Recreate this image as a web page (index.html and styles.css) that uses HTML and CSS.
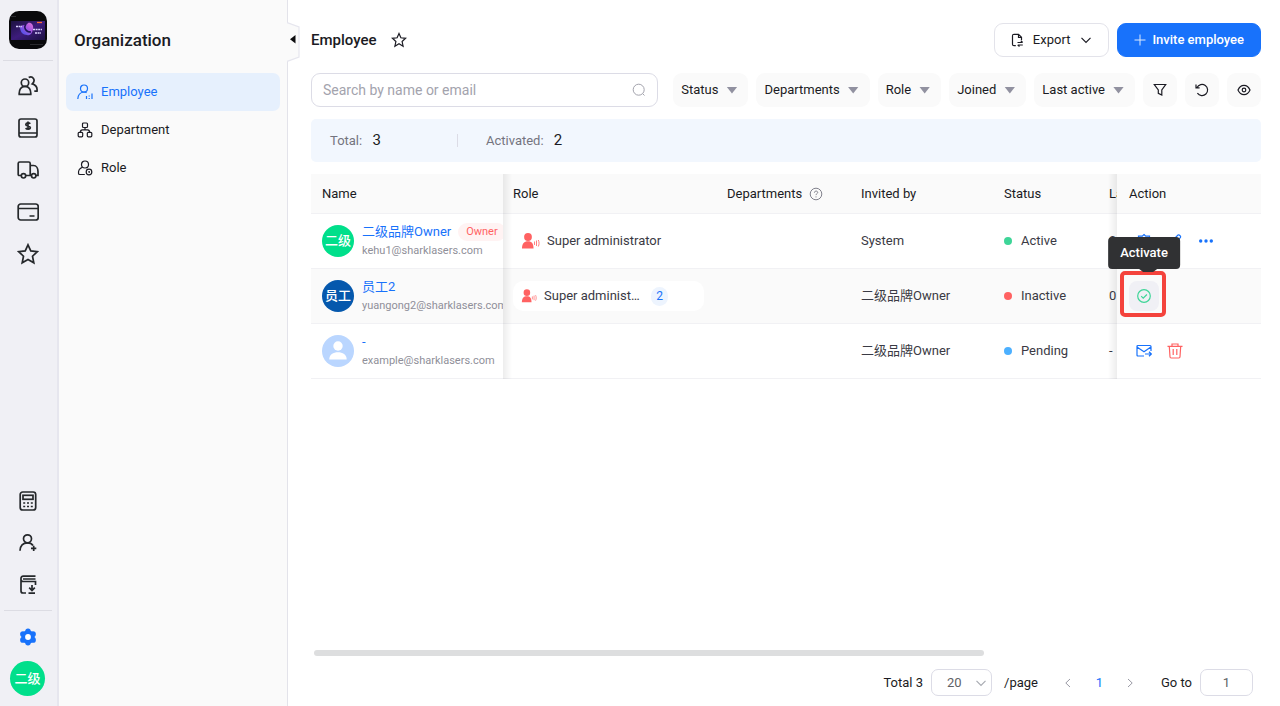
FILE: index.html
```html
<!DOCTYPE html>
<html lang="en">
<head>
<meta charset="utf-8">
<title>Employee - Organization</title>
<link rel="stylesheet" href="styles.css">
</head>
<body>
<nav class="rail" aria-label="Main">
  <a class="brand" href="#" aria-label="Home">
    <svg width="40" height="40" viewBox="0 0 40 40">
      <defs>
        <linearGradient id="screen" x1="0" y1="0" x2="1" y2="1"><stop offset="0" stop-color="#1c1240"/><stop offset=".5" stop-color="#3d1c7c"/><stop offset="1" stop-color="#1a1040"/></linearGradient>
        <linearGradient id="swirl" x1="0" y1="1" x2="1" y2="0"><stop offset="0" stop-color="#3450e8"/><stop offset=".6" stop-color="#a855e0"/><stop offset="1" stop-color="#e078d8"/></linearGradient>
      </defs>
      <rect x="1" y="1" width="38" height="38" rx="10" fill="#09090b"/>
      <rect x="3" y="11" width="34" height="19" fill="url(#screen)"/>
      <path d="M12 17c3-3 6-1 8-4 3-1 6 2 5 6-1 5-3 7-6 6-4 0-7-3-7-8z" fill="url(#swirl)"/>
      <path d="M18 14c-3 4 0 8 5 8" stroke="#20155a" stroke-width="1.500" fill="none"/>
      <path d="M8 16.500h6M25 19.500h9M27 23h6" stroke="#dcd4ff" stroke-width="1.300" stroke-dasharray="2 .6"/>
      <path d="M29 12.500h5" stroke="#ff6b35" stroke-width="1.300"/>
      <path d="M3 6.500h5M22 34.500h13" stroke="#39393d" stroke-width=".7"/>
    </svg>
  </a>
  <hr class="rail-line">
  <div class="rail-group">
    <a class="rail-item" href="#" aria-label="Customers"><svg width="22" height="22" viewBox="0 0 22 22"><circle cx="8" cy="7.700" r="3.700"/><path d="M2.200 19.300c-.3-5 2-7.900 5.800-7.900s6.100 2.900 5.800 7.900zM11.700 2.600c3.800-2.200 7.600 2.600 3.600 6.300 3.300 1 5.200 3.800 4.700 7.200h-2.700"/></svg></a>
    <a class="rail-item" href="#" aria-label="Finance"><svg width="22" height="22" viewBox="0 0 22 22"><rect x="2" y="2" width="18" height="18" rx="2"/><path d="M2 16h18M13.300 6.800c-1-1.200-4.300-1.300-4.500.7-.1 2 4.500 1 4.500 3.100 0 2-3.600 1.800-4.700.5M11 4.500v8.500"/></svg></a>
    <a class="rail-item" href="#" aria-label="Shipping"><svg width="22" height="22" viewBox="0 0 22 22"><path d="M4 16.500H2.200a1 1 0 0 1-1-1v-11c0-1 .5-1.500 1.500-1.500h9c1 0 1.500.5 1.500 1.500v12H9M13 6.500h3.500c3 0 4.500 3 4.500 6v4h-2.200M13 16.500h1"/><circle cx="6.500" cy="16.800" r="2.200"/><circle cx="16.700" cy="16.800" r="2.200"/></svg></a>
    <a class="rail-item" href="#" aria-label="Cards"><svg width="22" height="22" viewBox="0 0 22 22"><rect x="1.200" y="3" width="20" height="16" rx="2.500"/><path d="M1.200 7.500h20M12.500 15h5"/></svg></a>
    <a class="rail-item" href="#" aria-label="Favorites"><svg width="22" height="22" viewBox="0 0 22 22"><path d="M11 1.800l2.800 6.100 6.500.8-4.800 4.500 1.300 6.600-5.800-3.300-5.800 3.300 1.300-6.600L1.700 8.700l6.500-.8z"/></svg></a>
  </div>
  <div class="rail-group rail-bottom">
    <a class="rail-item" href="#" aria-label="Calculator"><svg width="22" height="22" viewBox="0 0 22 22"><rect x="3.200" y="2" width="15.500" height="18" rx="2.500"/><rect x="6" y="5.300" width="10" height="4"/><path d="M6.200 13h2M10 13h2M13.800 13h2M6.200 16.500h2M10 16.500h2M13.800 16.500h2"/></svg></a>
    <a class="rail-item" href="#" aria-label="Add user"><svg width="22" height="22" viewBox="0 0 22 22"><circle cx="10.500" cy="6.800" r="4"/><path d="M3 18.700c.3-5 3.200-7.800 7.500-7.800 2.600 0 4.400.9 5.500 2.600M16.700 13.800v5.200M14 16.400h5.300"/></svg></a>
    <a class="rail-item" href="#" aria-label="Downloads"><svg width="22" height="22" viewBox="0 0 22 22"><path d="M18.500 2.200H6.500C4.500 2.200 4 3 4 4.200V17c0 1.300.7 2 2 2h3M4 5.500c0 1.200.8 2 2 2h12.500V11M6 5h12.500M15 11v5.200M12.200 13.700l2.800 2.800 2.800-2.800M11.500 19.200h6.500"/></svg></a>
  </div>
  <hr class="rail-line rail-line-short">
  <a class="rail-item rail-settings" href="#" aria-label="Settings"><svg width="20" height="20" viewBox="0 0 20 20"><g fill="#1872fb"><circle cx="10" cy="10" r="6.700"/><circle cx="10" cy="4.300" r="2.700"/><circle cx="10" cy="15.700" r="2.700"/><circle cx="5" cy="7.100" r="2.900"/><circle cx="15" cy="7.100" r="2.900"/><circle cx="5" cy="12.900" r="2.900"/><circle cx="15" cy="12.900" r="2.900"/></g><circle cx="10" cy="10" r="2.900" fill="#fff"/></svg></a>
  <button class="avatar avatar-me" type="button">二级</button>
</nav>

<aside class="side">
  <h2 class="side-title">Organization</h2>
  <ul class="menu">
    <li><a class="menu-item menu-active" href="#"><svg width="16" height="16" viewBox="0 0 16 16"><circle cx="7" cy="4.500" r="3.500"/><path d="M.8 15c.2-4 2.400-6.700 6.200-7 1 0 1.900.2 2.600.7M9.500 15v-3M12.200 15v-1M15 15V9.500M12.200 12.500v-1"/></svg>Employee</a></li>
    <li><a class="menu-item" href="#"><svg width="16" height="16" viewBox="0 0 16 16"><rect x="5.500" y="1" width="5" height="4.500" rx="1"/><rect x="1.200" y="10.300" width="4.500" height="4.500" rx="1"/><rect x="10.300" y="10.300" width="4.500" height="4.500" rx="1"/><path d="M8 5.500v2.300M3.400 10.300c0-1.800.6-2.500 2-2.500h5.200c1.400 0 2 .7 2 2.500"/></svg>Department</a></li>
    <li><a class="menu-item" href="#"><svg width="16" height="16" viewBox="0 0 16 16"><circle cx="8" cy="4.500" r="3.500"/><path d="M5.500 7.300C2.500 8.500 1.300 11 1.500 13.200c0 .9.500 1.300 1.300 1.300h5"/><circle cx="12" cy="12" r="2.800"/><path d="M10.500 8l-1-.7M12 11v1.200h1"/></svg>Role</a></li>
  </ul>
  <button class="fold" type="button" aria-label="Collapse menu">
    <svg width="13" height="40" viewBox="0 0 13 40"><path d="M0 .5l12 4.500v30L0 39.500z" fill="#fafafa"/><path d="M0 .5l12 4.500v30L0 39.500" stroke="#e6e6ee"/><path d="M8.500 13v8.500L3 17.200z" fill="#0c0c0e"/></svg>
  </button>
</aside>

<main class="main">
  <header class="head">
    <h1 class="title">Employee</h1>
    <button class="star" type="button" aria-label="Favorite"><svg width="16" height="16" viewBox="0 0 16 16"><path d="M8 1.500l1.900 4.300 4.700.5-3.500 3.200 1 4.700L8 11.800l-4.100 2.400 1-4.700L1.400 6.300l4.700-.5z"/></svg></button>
    <div class="head-actions">
      <button class="btn" type="button"><svg width="14" height="14" viewBox="0 0 14 14"><path d="M4.800 12.700H3c-1 0-1.500-.5-1.500-1.500V2.800c0-1 .5-1.500 1.500-1.500h4.500L10.500 4.300V7M7.500 1.500v3h3M6.500 9.500h5M9.800 7.800l1.900 1.700M11.800 12h-5M8.500 13.500L6.700 12"/></svg>Export<svg class="chev" width="12" height="12" viewBox="0 0 12 12"><path d="M1.500 3.800L6 8.300l4.500-4.500"/></svg></button>
      <button class="btn btn-primary" type="button"><svg class="plus" width="12" height="12" viewBox="0 0 12 12"><path d="M6 .5v11M.5 6h11"/></svg>Invite employee</button>
    </div>
  </header>

  <div class="filters">
    <label class="search"><input type="text" placeholder="Search by name or email" aria-label="Search by name or email"><svg width="14" height="14" viewBox="0 0 14 14"><circle cx="6.700" cy="6.700" r="5.500"/><path d="M10.800 10.800l1.700 1.700"/></svg></label>
    <div class="filter-set">
      <button class="filter" type="button">Status<span class="caret"></span></button>
      <button class="filter" type="button">Departments<span class="caret"></span></button>
      <button class="filter" type="button">Role<span class="caret"></span></button>
      <button class="filter" type="button">Joined<span class="caret"></span></button>
      <button class="filter" type="button">Last active<span class="caret"></span></button>
      <button class="filter filter-icon" type="button" aria-label="Filter"><svg width="14" height="14" viewBox="0 0 14 14"><path d="M1.300 1.500h11.400L8.800 7v5L5.300 10.300V7z"/></svg></button>
      <button class="filter filter-icon" type="button" aria-label="Reset"><svg width="14" height="14" viewBox="0 0 14 14"><path d="M2 4.500a5.600 5.600 0 1 1 .4 5.700M1 1.500v3.300h3.600"/></svg></button>
      <button class="filter filter-icon" type="button" aria-label="Visible columns"><svg width="14" height="14" viewBox="0 0 14 14"><path d="M1 7c1.300-3 3.300-4.700 6-4.700S11.700 4 13 7c-1.300 3-3.300 4.700-6 4.700S2.300 10 1 7z"/><circle cx="7" cy="7" r="1.800"/></svg></button>
    </div>
  </div>

  <div class="stats">
    <div class="stat">Total: <b>3</b></div>
    <div class="stat">Activated: <b>2</b></div>
  </div>

  <div class="table-box">
    <table class="table">
      <colgroup><col class="c-name"><col class="c-role"><col class="c-dep"><col class="c-inv"><col class="c-status"><col class="c-last"><col class="c-act"></colgroup>
      <thead>
        <tr><th class="pin-left">Name</th><th>Role</th><th><span class="with-help">Departments<svg width="14" height="14" viewBox="0 0 14 14"><circle cx="7" cy="7" r="5.800"/><path d="M5.400 5.700c0-2.200 3.300-2.100 3.300-.2 0 1.200-1.700 1.200-1.700 2.600M7 9.400v1"/></svg></span></th><th>Invited by</th><th>Status</th><th>Last active</th><th class="pin-right">Action</th></tr>
      </thead>
      <tbody>
        <tr>
          <td class="pin-left"><div class="person"><span class="avatar">二级</span><div class="who"><div class="who-top"><a href="#">二级品牌Owner</a><span class="tag">Owner</span></div><div class="mail">kehu1@sharklasers.com</div></div></div></td>
          <td><div class="role"><svg width="19" height="18" viewBox="0 0 19 18"><circle cx="7" cy="5" r="3.900"/><path d="M1 16.500c0-5 2.200-7.300 6-7.300s5.500 2.300 5.500 7.300z"/><path class="wave" d="M13.500 9.500v3.500M15.500 8.500v5.500M17.300 8c1 2 1 4.500 0 6.500"/></svg>Super administrator</div></td>
          <td></td><td>System</td>
          <td><span class="status"><i class="dot dot-green"></i>Active</span></td><td>0</td>
          <td class="pin-right"><div class="acts">
            <button type="button" aria-label="Manage"><svg width="16" height="16" viewBox="0 0 16 16"><path d="M8 1.500l1.700 1.700h3.800v4L15 8l-1.500 1.500v4h-4L8 15l-1.500-1.500h-4v-4L1 8l1.500-1.500V3.200h3.800z"/></svg></button>
            <button type="button" aria-label="Edit"><svg width="16" height="16" viewBox="0 0 16 16"><path d="M2 14l1-4 8-8c1-.8 3.300 1.200 2.500 2.500L6 13z"/></svg></button>
            <button type="button" aria-label="More"><svg width="16" height="16" viewBox="0 0 16 16"><g fill="#1872fb" stroke="none"><circle cx="2.700" cy="8" r="1.700"/><circle cx="8" cy="8" r="1.700"/><circle cx="13.300" cy="8" r="1.700"/></g></svg></button>
          </div></td>
        </tr>
        <tr class="hovered">
          <td class="pin-left"><div class="person"><span class="avatar avatar-navy">员工</span><div class="who"><div class="who-top"><a href="#">员工2</a></div><div class="mail">yuangong2@sharklasers.com</div></div></div></td>
          <td><div class="role role-pill"><svg width="16" height="16" viewBox="0 0 19 18"><circle cx="7" cy="5" r="3.900"/><path d="M1 16.500c0-5 2.200-7.300 6-7.300s5.500 2.300 5.500 7.300z"/><path class="wave" d="M13.500 9.500v3.500M15.500 8.500v5.500M17.300 8c1 2 1 4.500 0 6.500"/></svg><span class="role-name">Super administ…</span><span class="count">2</span></div></td>
          <td></td><td>二级品牌Owner</td>
          <td><span class="status"><i class="dot dot-red"></i>Inactive</span></td><td>0</td>
          <td class="pin-right"><div class="acts">
            <button class="act-on" type="button" aria-describedby="tip"><svg class="green" width="16" height="16" viewBox="0 0 16 16"><circle cx="8" cy="8" r="6.300"/><path d="M5.200 8.200l2 2 3.700-3.700"/></svg><span class="frame"></span><span class="tip" id="tip" role="tooltip">Activate</span></button>
          </div></td>
        </tr>
        <tr>
          <td class="pin-left"><div class="person"><span class="avatar avatar-pale"><svg width="32" height="32" viewBox="0 0 32 32"><circle cx="16" cy="11" r="4.700"/><path d="M7.300 24.500c-.7-9.800 17.900-9.800 17.400 0z"/></svg></span><div class="who"><div class="who-top"><a href="#">-</a></div><div class="mail">example@sharklasers.com</div></div></div></td>
          <td></td><td></td><td>二级品牌Owner</td>
          <td><span class="status"><i class="dot dot-blue"></i>Pending</span></td><td>-</td>
          <td class="pin-right"><div class="acts">
            <button type="button" aria-label="Resend invitation"><svg width="16" height="16" viewBox="0 0 16 16"><path d="M8 13H2c-.7 0-1-.3-1-1V3.500c0-.7.300-1 1-1h12c.7 0 1 .3 1 1V8M1.300 4.300L8 8.800l6.500-4.500M9 11h6.300M13 8.800l2.300 2.200-2.300 2.200"/></svg></button>
            <button type="button" aria-label="Delete"><svg class="red" width="16" height="16" viewBox="0 0 16 16"><path d="M.5 3.300h15M5 3.300V1h6v2.300M2.300 3.300l.7 10.500c0 .8.500 1.200 1.200 1.200h7.600c.7 0 1.200-.4 1.200-1.200l.7-10.500M6.200 6v6M9.800 6v6"/></svg></button>
          </div></td>
        </tr>
      </tbody>
    </table>
  </div>

  <div class="scroll"><div class="scroll-thumb"></div></div>

  <footer class="pager">
    <label for="size">Total 3</label>
    <span class="size"><select id="size"><option>20</option></select><svg width="12" height="12" viewBox="0 0 12 12"><path d="M1.500 3.800L6 8.300l4.500-4.500"/></svg></span>
    <span class="per">/page</span>
    <button class="page-btn" type="button" aria-label="Previous page"><svg width="12" height="12" viewBox="0 0 12 12"><path d="M8 2L3.800 6 8 10"/></svg></button>
    <button class="page-btn page-now" type="button">1</button>
    <button class="page-btn" type="button" aria-label="Next page"><svg width="12" height="12" viewBox="0 0 12 12"><path d="M4 2l4.200 4L4 10"/></svg></button>
    <label class="goto" for="goto">Go to</label>
    <input class="goto-input" id="goto" type="text" value="1">
  </footer>
</main>
</body>
</html>
```

FILE: styles.css
```css
* { box-sizing: border-box; }

body {
  margin: 0;
  display: flex;
  min-height: 100vh;
  background: #fff;
  color: #1b1b23;
  font: 13px/20px Roboto, "Noto Sans CJK SC", sans-serif;
}

button, input, select { font: inherit; color: inherit; }
button { padding: 0; border: 0; background: none; cursor: pointer; }
a { color: #1872fb; text-decoration: none; }
svg { display: block; flex: none; fill: none; stroke: currentColor; stroke-width: 1.2; }

/* Icon rail */
.rail {
  flex: none;
  width: 59px;
  padding: 10px 2px 10px 0;
  display: flex;
  flex-direction: column;
  align-items: center;
  background: #f0f0f5;
  border-right: 2px solid #e6e6ee;
}
.brand svg { stroke: none; }
.rail-line { width: 50px; height: 1px; margin: 10px 0 14px; border: 0; background: #dcdce3; }
.rail-group { display: flex; flex-direction: column; gap: 20px; }
.rail-item { color: #25282b; }
.rail-item svg { stroke-width: 1.7; }
.rail-bottom { margin-top: auto; }
.rail-line-short { width: 48px; margin: 14px 0 16px; }
.rail-settings svg { stroke: none; }

.avatar {
  flex: none;
  width: 32px;
  height: 32px;
  display: flex;
  align-items: center;
  justify-content: center;
  border-radius: 50%;
  background: #00df8b;
  color: #fff;
  font-size: 13px;
  font-weight: 500;
}
.avatar-me { width: 35px; height: 35px; margin-top: 14px; }
.avatar-navy { background: #0558ad; }
.avatar-pale { background: #bad6ff; }
.avatar-pale svg { fill: #fff; stroke: none; }

/* Section menu */
.side {
  position: relative;
  flex: none;
  width: 229px;
  padding: 28px 7px;
  background: #fafafa;
  border-right: 1px solid #e3e3ea;
}
.side-title { margin: 0 8px 21px; font-size: 17px; line-height: 24px; font-weight: 500; }
.menu { margin: 0; padding: 0; list-style: none; }
.menu-item {
  display: flex;
  align-items: center;
  gap: 8px;
  height: 38px;
  padding: 0 11px;
  border-radius: 7px;
  color: #1b1b23;
}
.menu-active { background: #e6f0fd; color: #1872fb; }
.fold { position: absolute; top: 22px; right: -13px; z-index: 5; }
.fold svg { stroke: none; }

/* Page */
.main {
  flex: 1;
  min-width: 0;
  display: flex;
  flex-direction: column;
  padding: 23px 19px 10px 23px;
}
.head { display: flex; align-items: center; margin-bottom: 16px; }
.title { margin: 0 14px 0 0; font-size: 15px; line-height: 24px; font-weight: 500; }
.head-actions { display: flex; gap: 8px; margin-left: auto; }
.btn {
  display: flex;
  align-items: center;
  gap: 8px;
  height: 34px;
  padding: 0 16px;
  border: 1px solid #e3e3ea;
  border-radius: 9px;
  background: #fff;
}
.btn-primary { border-color: #1872fb; background: #1872fb; color: #fff; font-weight: 500; gap: 6px; }
.plus { stroke-width: 1; opacity: .85; }
.chev { margin-left: 2px; }

.filters { display: flex; gap: 15px; margin-bottom: 12px; }
.search {
  flex: 1;
  min-width: 0;
  display: flex;
  align-items: center;
  height: 34px;
  padding: 0 11px;
  border: 1px solid #dcdce6;
  border-radius: 9px;
  color: #a3a3ad;
}
.search input { flex: 1; min-width: 0; padding: 0; border: 0; outline: 0; background: none; color: #1b1b23; font-size: 14px; }
.search input::placeholder { color: #a3a3ad; opacity: 1; }
.search svg { stroke-width: 1; }
.filter-set { display: flex; gap: 8px; }
.filter {
  display: flex;
  align-items: center;
  justify-content: center;
  gap: 8px;
  height: 34px;
  padding: 0 11px 0 8px;
  border-radius: 9px;
  background: #fafafa;
}
.filter-icon { width: 34px; padding: 0; }
.caret { width: 11px; height: 7px; background: #9191a0; clip-path: polygon(0 0, 100% 0, 50% 100%); }

.stats {
  display: flex;
  height: 43px;
  align-items: center;
  margin-bottom: 12px;
  padding: 0 19px;
  border-radius: 5px;
  background: #f2f7fe;
  color: #74747f;
}
.stat b { margin-left: 7px; color: #1b1b23; font-size: 15px; font-weight: 400; }
.stat:first-child { width: 128px; margin-right: 28px; background: linear-gradient(#dcdce6, #dcdce6) no-repeat right center / 1px 13px; }

/* Table with pinned outer columns */
.table-box { overflow: hidden; }
.table { width: 1345px; table-layout: fixed; border-spacing: 0; }
.c-name { width: 192px; }
.c-role { width: 214px; }
.c-dep { width: 134px; }
.c-inv { width: 143px; }
.c-status { width: 105px; }
.c-act { width: 144px; }
.table th, .table td { padding: 0 10px; border-bottom: 1px solid #f1f1f4; text-align: left; background: #fff; color: #3a3a44; }
.table th { height: 40px; background: #fafafa; color: #1b1b23; font-weight: 400; }
.table td { height: 55px; }
.table .hovered td { background: #fafafa; }
.table .pin-left { position: sticky; left: 0; z-index: 1; padding: 0 0 0 11px; }
.table .pin-right { position: sticky; right: 0; z-index: 1; padding: 0 12px; }
.pin-left::after, .pin-right::before { content: ""; position: absolute; top: 0; bottom: -1px; width: 9px; }
.pin-left::after { left: 100%; background: linear-gradient(to right, rgba(0, 0, 0, .07), transparent); }
.pin-right::before { right: 100%; background: linear-gradient(to left, rgba(0, 0, 0, .07), transparent); }
.with-help { display: flex; align-items: center; gap: 7px; }
.with-help svg { color: #81818c; stroke-width: 1; }

.person { display: flex; align-items: center; gap: 8px; overflow: hidden; white-space: nowrap; }
.who { padding-bottom: 2px; }
.who-top { display: flex; align-items: center; gap: 7px; height: 20px; }
.mail { color: #8f8f99; font-size: 11px; line-height: 17px; }
.tag { padding: 0 8px; border-radius: 9px; background: #fff3f3; color: #ff6262; font-size: 11px; line-height: 18px; }

.role { display: flex; align-items: center; gap: 7px; padding-left: 8px; }
.role svg { fill: #ff6262; stroke: none; }
.role .wave { fill: none; stroke: #ff8080; stroke-width: 1; }
.role-pill { height: 30px; width: 191px; border-radius: 10px; background: #fff; }
.role-name { width: 100px; }
.count { width: 17px; border-radius: 9px; background: #edf4fe; color: #1872fb; font-size: 12px; line-height: 19px; text-align: center; }
.status { display: flex; align-items: center; gap: 9px; }
.dot { width: 8px; height: 8px; border-radius: 50%; }
.dot-green { background: #3ed598; }
.dot-red { background: #ff6262; }
.dot-blue { background: #4cb0ff; }

.acts { display: flex; gap: 1px; }
.acts button { position: relative; width: 30px; height: 30px; display: flex; align-items: center; justify-content: center; border-radius: 8px; color: #1872fb; }
.acts .act-on { background: #f0f0f5; }
.acts .green { color: #3ed598; }
.acts .red { color: #ff6262; }
.frame { position: absolute; inset: -10px -7px -6px -9px; border: 4px solid #f4433c; border-radius: 5px; }
.tip {
  position: absolute;
  bottom: 42px;
  left: 50%;
  transform: translateX(-50%);
  padding: 6px 12px;
  border-radius: 4px;
  background: #303133;
  color: #fff;
  font-weight: 500;
}
.tip::after { content: ""; position: absolute; top: 100%; left: 50%; margin-left: -5px; width: 10px; border: 4px solid transparent; border-top: 3px solid #303133; border-bottom: 0; }

.scroll { margin-top: auto; padding: 0 3px; }
.scroll-thumb { width: 71%; height: 6px; border-radius: 3px; background: #dddedf; }

.pager { display: flex; align-items: center; justify-content: flex-end; margin-top: 13px; padding-right: 8px; }
.size { position: relative; width: 61px; margin: 0 12px 0 8px; }
.size select, .goto-input {
  width: 100%;
  height: 27px;
  padding: 0 15px;
  border: 1px solid #dcdce6;
  border-radius: 7px;
  background: #fff;
  color: #606266;
  appearance: none;
}
.size svg { position: absolute; right: 5px; top: 8px; color: #a8abb2; pointer-events: none; }
.per { margin-right: 15px; }
.page-btn { width: 31px; display: flex; justify-content: center; }
.page-btn svg { color: #9a9aa5; stroke-width: 1; }
.page-now { color: #1872fb; }
.goto { margin: 0 8px 0 15px; }
.goto-input { width: 53px; padding: 0; text-align: center; }
```
